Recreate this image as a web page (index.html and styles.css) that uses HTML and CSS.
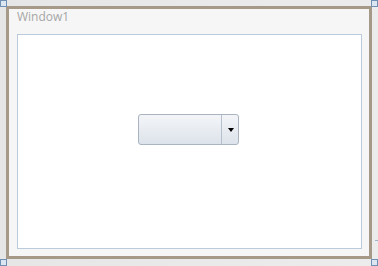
FILE: index.html
```html
<!DOCTYPE html>
<html lang="en">
<head>
    <meta charset="UTF-8">
    <title>Window1 designer</title>
    <link rel="stylesheet" href="styles.css">
</head>
<body>

<!-- Design surface -->
<div class="surface">
    <div class="window">
        <div class="title">Window1</div>
        <div class="grid">
            <div class="combo">
                <div class="combo-text"></div>
                <div class="combo-button"><span class="arrow"></span></div>
            </div>
        </div>
    </div>

    <!-- Selection handles -->
    <span class="handle tl"></span>
    <span class="handle tr"></span>
    <span class="handle bl"></span>
    <span class="handle br"></span>
    <span class="edge-mark"></span>
</div>

</body>
</html>
```

FILE: styles.css
```css
body {
    margin: 0;
    padding: 0;
    font-family: "Open Sans", "Noto Sans", sans-serif;
    background-color: #e8e8e8;
}
.surface {
    position: relative;
    width: 378px;
    height: 266px;
    padding: 6px 0 0 6px;
    box-sizing: border-box;
    background: linear-gradient(to right, #e6e6e6, #ececec);
}
.window {
    width: 366px;
    height: 253px;
    box-sizing: border-box;
    border: 3px solid #a79987;
    background-color: #f6f6f6;
    padding: 0 7px 7px 8px;
    display: flex;
    flex-direction: column;
}
.title {
    height: 25px;
    font-size: 12px;
    line-height: 16px;
    color: #a6a6a6;
}
.grid {
    flex: 1;
    border: 1px solid #bccbdb;
    background-color: #ffffff;
    display: flex;
    align-items: flex-start;
    justify-content: center;
    padding-right: 2px;
    padding-top: 79px;
}
.combo {
    width: 101px;
    height: 31px;
    box-sizing: border-box;
    border: 1px solid #aab4c1;
    border-radius: 3px;
    background: linear-gradient(to bottom, #f3f5f8, #dde3eb);
    display: flex;
}
.combo-text {
    flex: 1;
    border-right: 1px solid #b6c0cc;
}
.combo-button {
    width: 16px;
    display: flex;
    align-items: center;
    justify-content: center;
}
.arrow {
    width: 0;
    height: 0;
    border-left: 3px solid transparent;
    border-right: 3px solid transparent;
    border-top: 4px solid #000000;
    margin-left: 1px;
}
.handle {
    position: absolute;
    width: 7px;
    height: 7px;
    box-sizing: border-box;
    border: 1px solid #6f90b4;
    background-color: #dce6f1;
}
.tl { left: 0; top: 0; }
.tr { left: 371px; top: 0; }
.bl { left: 0; top: 259px; }
.br { left: 371px; top: 259px; }
.edge-mark {
    position: absolute;
    left: 375px;
    top: 240px;
    width: 3px;
    height: 1px;
    background-color: #9fb3c9;
}
```
